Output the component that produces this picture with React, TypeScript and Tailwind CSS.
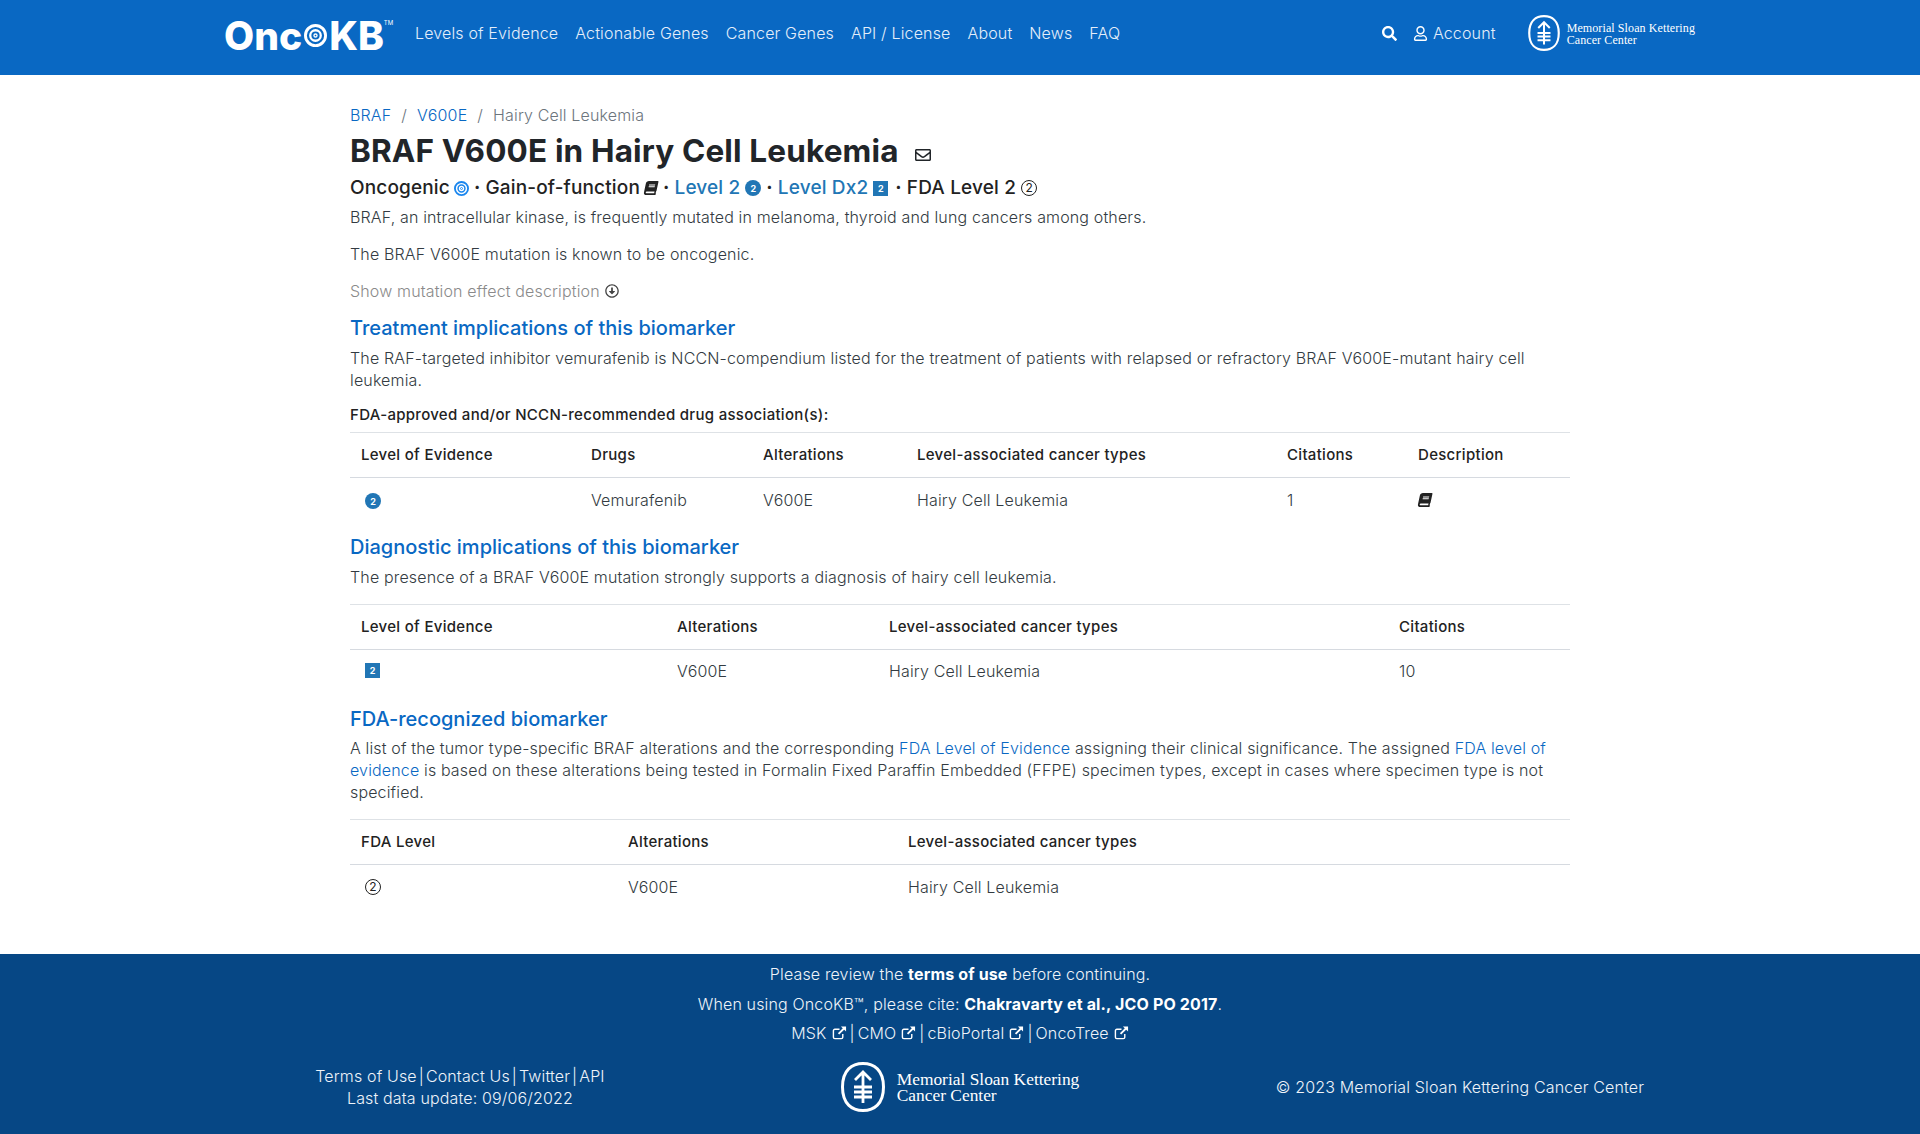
import { FaBook, FaRegArrowAltCircleDown, FaRegEnvelope, FaRegUser, FaSearch } from 'react-icons/fa';

const NAV = ['Levels of Evidence', 'Actionable Genes', 'Cancer Genes', 'API / License', 'About', 'News', 'FAQ'];

function Target({ size, color }: { size: number; color: string }) {
  return (
    <svg width={size} height={size} viewBox="0 0 24 24" fill="none" stroke={color} className="shrink-0">
      <circle cx="12" cy="12" r="10.5" strokeWidth="3" />
      <circle cx="12" cy="12" r="5.5" strokeWidth="2.4" />
      <circle cx="12" cy="12" r="1.6" strokeWidth="1.4" />
    </svg>
  );
}

function MskIcon({ className }: { className: string }) {
  return (
    <svg viewBox="0 0 44 50" fill="none" stroke="white" className={className}>
      <path d="M22 1.5C33 1.5 42.5 8 42.5 25S33 48.5 22 48.5 1.500 42 1.500 25 11 1.500 22 1.500Z" strokeWidth="3" />
      <path d="M22 10V41M14 18l8-8 8 8M13 25h18M13 30h18M13 35h18" strokeWidth="2.800" />
    </svg>
  );
}

function Book() {
  return <FaBook className="size-[14px] -skew-x-12 text-[#222]" />;
}

function LevelCircle() {
  return <span className="inline-flex items-center justify-center size-4 rounded-full bg-[#2176b5] text-white text-[9px] font-bold leading-none tracking-normal">2</span>;
}

function DxSquare() {
  return <span className="inline-flex items-center justify-center size-[15px] bg-[#2176b5] text-white text-[9px] font-bold leading-none tracking-normal">2</span>;
}

function FdaCircle() {
  return <span className="inline-flex items-center justify-center size-4 rounded-full border border-[#222] text-[#222] text-[12px] font-normal leading-none tracking-normal">2</span>;
}

function ExternalIcon() {
  return (
    <svg viewBox="0 0 16 16" fill="none" className="inline-block size-[15px] ml-[5px] align-[-1px]" stroke="white">
      <path d="M11.500 9.500V13a1.500 1.500 0 0 1-1.500 1.500H3A1.500 1.500 0 0 1 1.500 13V6A1.500 1.500 0 0 1 3 4.500h5" strokeWidth="1.500" />
      <path d="M7 9.500 13 3.500" strokeWidth="2" />
      <path d="M9.500 1.500h5.500V7z" fill="white" stroke="none" />
    </svg>
  );
}

function Dot() {
  return <span className="mx-[5px] font-bold">·</span>;
}

function Heading({ children, mt }: { children: string; mt: string }) {
  return <h2 className={`${mt} text-[20px] leading-[28px] font-medium tracking-normal text-[#0968c3]`}>{children}</h2>;
}

function DataTable({ widths, head, row }: { widths: number[]; head: string[]; row: React.ReactNode[] }) {
  return (
    <table className="w-full table-fixed border-collapse">
      <colgroup>
        {widths.map((w, i) => <col key={i} style={{ width: w }} />)}
      </colgroup>
      <thead>
        <tr>
          {head.map(h => <th key={h} className="h-[45px] px-[11px] border-t border-[#dee2e6] text-left text-[15px] tracking-[0.3px] font-medium text-[#222]">{h}</th>)}
        </tr>
      </thead>
      <tbody>
        <tr>
          {row.map((c, i) => <td key={i} className="h-[44px] px-[11px] border-t border-[#d6dae0]">{c}</td>)}
        </tr>
      </tbody>
    </table>
  );
}

function Header() {
  return (
    <header className="h-[75px] bg-[#0968c3] flex items-start pl-[224px] pr-[225px] text-white">
      <div className="flex items-center h-[70px] w-[191px] shrink-0 text-[39px] font-extrabold tracking-normal leading-none">
        <span>Onc</span>
        <span className="mx-[2px]"><Target size={23} color="white" /></span>
        <span>KB</span>
        <span className="text-[6px] self-start mt-[20px] font-normal">TM</span>
      </div>
      <nav className="flex gap-[17px] h-[66px] items-center text-[#e4eefa]">
        {NAV.map(n => <a key={n}>{n}</a>)}
      </nav>
      <div className="ml-auto flex items-center h-[66px]">
        <FaSearch className="size-[15px] mr-4" />
        <FaRegUser className="size-[15px] mr-[5px]" />
        <span className="text-[#e4eefa]">Account</span>
        <MskIcon className="w-[32px] h-[36px] ml-8" />
        <div className="ml-[7px] mt-[2px] font-['Liberation_Serif',serif] text-[12px] leading-[12px] tracking-[0.1px]">
          <div>Memorial Sloan Kettering</div>
          <div>Cancer Center</div>
        </div>
      </div>
    </header>
  );
}

function Main() {
  return (
    <main className="w-[1220px] mx-auto pt-[28px] pb-[45px]">
      <div className="h-6 flex items-center gap-[10px] text-[#6c757d]">
        <a className="text-[#0968c3]">BRAF</a><span>/</span>
        <a className="text-[#0968c3]">V600E</a><span>/</span>
        <span>Hairy Cell Leukemia</span>
      </div>
      <h1 className="mt-1 flex items-center text-[31.500px] leading-[40px] font-bold text-[#212529]">
        BRAF V600E in Hairy Cell Leukemia
        <FaRegEnvelope className="size-[16px] ml-4 mt-[8px] font-normal" />
      </h1>
      <div className="mt-[2px] -mb-px flex items-center text-[19px] leading-[30px] font-medium text-[#222]">
        Oncogenic<span className="ml-[4px]"><Target size={15} color="#1a86ee" /></span><Dot />
        Gain-of-function<span className="ml-[4px]"><Book /></span><Dot />
        <a className="text-[#2176b5] mr-[5px]">Level 2</a><LevelCircle /><Dot />
        <a className="text-[#2176b5] mr-[5px]">Level Dx2</a><DxSquare /><span className="ml-[2px]"><Dot /></span>
        FDA Level 2<span className="ml-[5px] inline-flex"><FdaCircle /></span>
      </div>
      <p className="mt-1">BRAF, an intracellular kinase, is frequently mutated in melanoma, thyroid and lung cancers among others.</p>
      <p className="mt-[15px]">The BRAF V600E mutation is known to be oncogenic.</p>
      <p className="mt-[15px] flex items-center text-[#8a8a8a]">
        Show mutation effect description<FaRegArrowAltCircleDown className="size-[14px] ml-[5px] text-[#444]" />
      </p>
      <Heading mt="mt-3">Treatment implications of this biomarker</Heading>
      <p className="mt-[5px]">The RAF-targeted inhibitor vemurafenib is NCCN-compendium listed for the treatment of patients with relapsed or refractory BRAF V600E-mutant hairy cell leukemia.</p>
      <p className="mt-[13px] mb-[6px] text-[15px] tracking-[0.3px] font-medium text-[#222]">FDA-approved and/or NCCN-recommended drug association(s):</p>
      <DataTable
        widths={[230, 172, 154, 370, 131, 163]}
        head={['Level of Evidence', 'Drugs', 'Alterations', 'Level-associated cancer types', 'Citations', 'Description']}
        row={[
          <span className="flex pl-[4px] pt-[3px]"><LevelCircle /></span>,
          'Vemurafenib', 'V600E', 'Hairy Cell Leukemia', '1',
          <Book />,
        ]}
      />
      <Heading mt="mt-[11px]">Diagnostic implications of this biomarker</Heading>
      <p className="mt-[5px] mb-4">The presence of a BRAF V600E mutation strongly supports a diagnosis of hairy cell leukemia.</p>
      <DataTable
        widths={[316, 212, 510, 182]}
        head={['Level of Evidence', 'Alterations', 'Level-associated cancer types', 'Citations']}
        row={[<span className="flex pl-[4px] pb-[2px]"><DxSquare /></span>, 'V600E', 'Hairy Cell Leukemia', '10']}
      />
      <Heading mt="mt-3">FDA-recognized biomarker</Heading>
      <p className="mt-1 mb-4">
        A list of the tumor type-specific BRAF alterations and the corresponding <a className="text-[#0968c3]">FDA Level of Evidence</a> assigning their clinical significance. The assigned <a className="text-[#0968c3]">FDA level of evidence</a> is based on these alterations being tested in Formalin Fixed Paraffin Embedded (FFPE) specimen types, except in cases where specimen type is not specified.
      </p>
      <DataTable
        widths={[267, 280, 673]}
        head={['FDA Level', 'Alterations', 'Level-associated cancer types']}
        row={[<span className="flex pl-[4px]"><FdaCircle /></span>, 'V600E', 'Hairy Cell Leukemia']}
      />
    </main>
  );
}

function Footer() {
  return (
    <footer className="h-[180px] bg-[#064785] text-[#eef3f9] pt-2 text-center">
      <div className="leading-6">Please review the <b className="font-bold text-white">terms of use</b> before continuing.</div>
      <div className="leading-6 mt-[6px]">When using OncoKB™, please cite: <b className="font-bold text-white">Chakravarty et al., JCO PO 2017</b>.</div>
      <div className="leading-6 mt-[5px]">
        MSK<ExternalIcon /><span className="mx-[3px]">|</span>CMO<ExternalIcon /><span className="mx-[3px]">|</span>cBioPortal<ExternalIcon /><span className="mx-[3px]">|</span>OncoTree<ExternalIcon />
      </div>
      <div className="w-[1500px] mx-auto mt-[17px] grid grid-cols-3 items-center">
        <div className="leading-[22px]">
          <div>Terms of Use<span className="mx-[2px]">|</span>Contact Us<span className="mx-[2px]">|</span>Twitter<span className="mx-[2px]">|</span>API</div>
          <div>Last data update: 09/06/2022</div>
        </div>
        <div className="flex items-center justify-center text-white text-left">
          <MskIcon className="w-[44px] h-[50px]" />
          <div className="ml-3 font-['Liberation_Serif',serif] text-[17.400px] leading-4 tracking-normal">
            <div>Memorial Sloan Kettering</div>
            <div>Cancer Center</div>
          </div>
        </div>
        <div>© 2023 Memorial Sloan Kettering Cancer Center</div>
      </div>
    </footer>
  );
}

export default function App() {
  return (
    <div className="min-h-[1134px] bg-white text-[#333b42] font-['Inter',sans-serif] text-[16px] leading-[22px] tracking-[0.15px] font-light">
      <Header />
      <Main />
      <Footer />
    </div>
  );
}
